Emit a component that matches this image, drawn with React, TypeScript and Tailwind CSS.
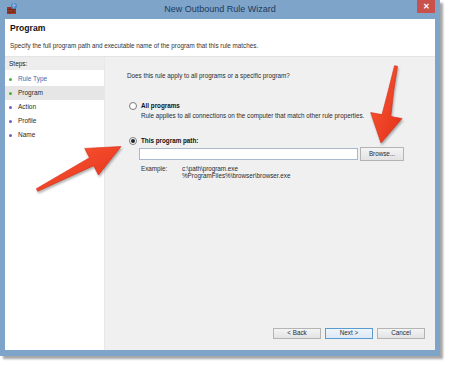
import type { ReactNode } from "react";

// ============================================================================
// Small pieces
// ============================================================================

function FirewallIcon() {
	return (
		<svg width="12" height="13" viewBox="0 0 12 13">
			<rect x="1" y="5" width="9" height="7" fill="#9c3b26" />
			<path d="M1 7.5h9M1 10h9M4 5v2.5M7 7.5v2.5M4 10v2" stroke="#5e1f12" strokeWidth="0.6" />
			<circle cx="8" cy="4" r="3" fill="#4f86c6" />
			<path d="M6.2 3.2c1 .5 2.6.4 3.6-.3M7.5 1.2c.6 1 .7 2.6.2 5" stroke="#bfe0f7" strokeWidth="0.6" fill="none" />
		</svg>
	);
}

function Radio({ checked }: { checked?: boolean }) {
	return (
		<div className="flex items-center justify-center w-[8px] h-[8px] rounded-full border border-[#7a7a7a] bg-white shrink-0">
			{checked && <div className="w-[4px] h-[4px] rounded-full bg-[#222]" />}
		</div>
	);
}

function WizardButton({ children, primary }: { children: ReactNode; primary?: boolean }) {
	return (
		<div
			className={`flex items-center justify-center w-[48px] h-[11px] text-[6.3px] leading-none border ${
				primary
					? "border-[#5a9bd0] bg-gradient-to-b from-[#eef5fb] to-[#dde9f4]"
					: "border-[#b4b4b4] bg-gradient-to-b from-[#f4f4f4] to-[#e3e3e3]"
			}`}
		>
			{children}
		</div>
	);
}

const steps = [
	{ name: "Rule Type", done: true, link: true },
	{ name: "Program", done: true, current: true },
	{ name: "Action" },
	{ name: "Profile" },
	{ name: "Name" },
];

// ============================================================================
// App
// ============================================================================

export default function App() {
	return (
		<div className="relative w-[450px] h-[365px] bg-white overflow-hidden font-['Liberation_Sans',Arial,sans-serif] text-[#2a2a2a]">
			<div className="flex flex-col w-[440px] h-[356px] bg-[#7fa4c9] shadow-[3px_3px_2px_rgba(60,60,60,0.45)]">
				{/* Title bar */}
				<div className="grid grid-cols-[1fr_auto_1fr] items-start h-[19px] shrink-0">
					<div className="pl-[6px] pt-[2px]">
						<FirewallIcon />
					</div>
					<div className="pt-[4px] text-[9px] leading-[11px] text-[#1c3a5e]">
						New Outbound Rule Wizard
					</div>
					<div className="flex justify-end pr-[5px]">
						<div className="flex items-center justify-center w-[18px] h-[13px] bg-[#c9504b] text-white text-[8px] font-bold leading-none">
							✕
						</div>
					</div>
				</div>

				<div className="flex flex-col flex-1 mx-[5px] mb-[6px] bg-white">
					{/* Header */}
					<div className="h-[38px] shrink-0 border-b border-[#e4e4e4] pl-[5px] pt-[4px]">
						<div className="text-[8.6px] leading-[11px] font-bold text-[#111]">Program</div>
						<div className="mt-[8px] text-[6.3px] leading-[8px] text-[#333]">
							Specify the full program path and executable name of the program that this rule matches.
						</div>
					</div>

					{/* Body */}
					<div className="flex flex-1">
						{/* Steps */}
						<div className="w-[100px] shrink-0 border-r border-[#e8e8e8] bg-white">
							<div className="h-[13px] bg-[#ededed] pl-[4px] text-[6.5px] leading-[13px] text-[#222]">
								Steps:
							</div>
							<div className="mt-[2px]">
								{steps.map((s) => (
									<div
										key={s.name}
										className={`flex items-center gap-[6px] h-[14px] pl-[4px] ${
											s.current ? "bg-[#e6e6e6]" : ""
										}`}
									>
										<div
											className={`w-[3px] h-[3px] rounded-full ${
												s.done ? "bg-[#4caf3c]" : "bg-[#6b5fc2]"
											}`}
										/>
										<span
											className={`text-[6.5px] leading-none ${
												s.link ? "text-[#3a6db3]" : "text-[#2a2a2a]"
											}`}
										>
											{s.name}
										</span>
									</div>
								))}
							</div>
						</div>

						{/* Content */}
						<div className="flex flex-col flex-1 bg-[#f0f0f0] text-[6.3px] leading-[8px]">
							<div className="pt-[15px] pl-[22px]">
								Does this rule apply to all programs or a specific program?
							</div>

							<div className="mt-[22px] pl-[24px] flex items-center gap-[4px]">
								<Radio />
								<span className="font-bold text-[#111]">All programs</span>
							</div>
							<div className="mt-[2px] pl-[36px]">
								Rule applies to all connections on the computer that match other rule properties.
							</div>

							<div className="mt-[17px] pl-[24px] flex items-center gap-[4px]">
								<Radio checked />
								<span className="font-bold text-[#111]">This program path:</span>
							</div>
							<div className="mt-[2px] pl-[34px] flex items-center gap-[2px] h-[14px]">
								<div className="w-[219px] h-[12px] bg-white border border-[#a9b8cc]" />
								<div className="flex items-center justify-center w-[44px] h-[14px] border border-[#b4b4b4] bg-gradient-to-b from-[#f4f4f4] to-[#e3e3e3]">
									Browse...
								</div>
							</div>
							<div className="mt-[4px] pl-[36px] flex leading-[7px]">
								<div className="w-[41px]">Example:</div>
								<div>
									<div>{"c:\\path\\program.exe"}</div>
									<div>{"%ProgramFiles%\\browser\\browser.exe"}</div>
								</div>
							</div>

							<div className="mt-auto mb-[11px] pr-[10px] flex justify-end gap-[4px]">
								<WizardButton>&lt; Back</WizardButton>
								<WizardButton primary>Next &gt;</WizardButton>
								<WizardButton>Cancel</WizardButton>
							</div>
						</div>
					</div>
				</div>
			</div>

			{/* Annotation arrows */}
			<svg
				className="absolute inset-0 pointer-events-none drop-shadow-[1px_2px_1px_rgba(0,0,0,0.3)]"
				width="450"
				height="365"
				viewBox="0 0 450 365"
			>
				<defs>
					<linearGradient id="redA" x1="0" y1="0" x2="1" y2="1">
						<stop offset="0" stopColor="#ff5a35" />
						<stop offset="1" stopColor="#e0301a" />
					</linearGradient>
				</defs>
				<polygon
					points="36.3,188.7 89.5,157.7 84.7,148.4 121,146.5 98.5,175 93.7,165.7 37.7,191.3"
					fill="url(#redA)"
					stroke="#d42a15"
					strokeWidth="0.6"
					strokeLinejoin="round"
				/>
				<path
					d="M394.5 65.7 L397.5 66.3 Q393 92 390.8 116.4 L402.1 118.5 L381 143 L370.7 112.5 L382 114.6 Q388 92 394.5 65.7 Z"
					fill="url(#redA)"
					stroke="#d42a15"
					strokeWidth="0.6"
					strokeLinejoin="round"
				/>
			</svg>
		</div>
	);
}
